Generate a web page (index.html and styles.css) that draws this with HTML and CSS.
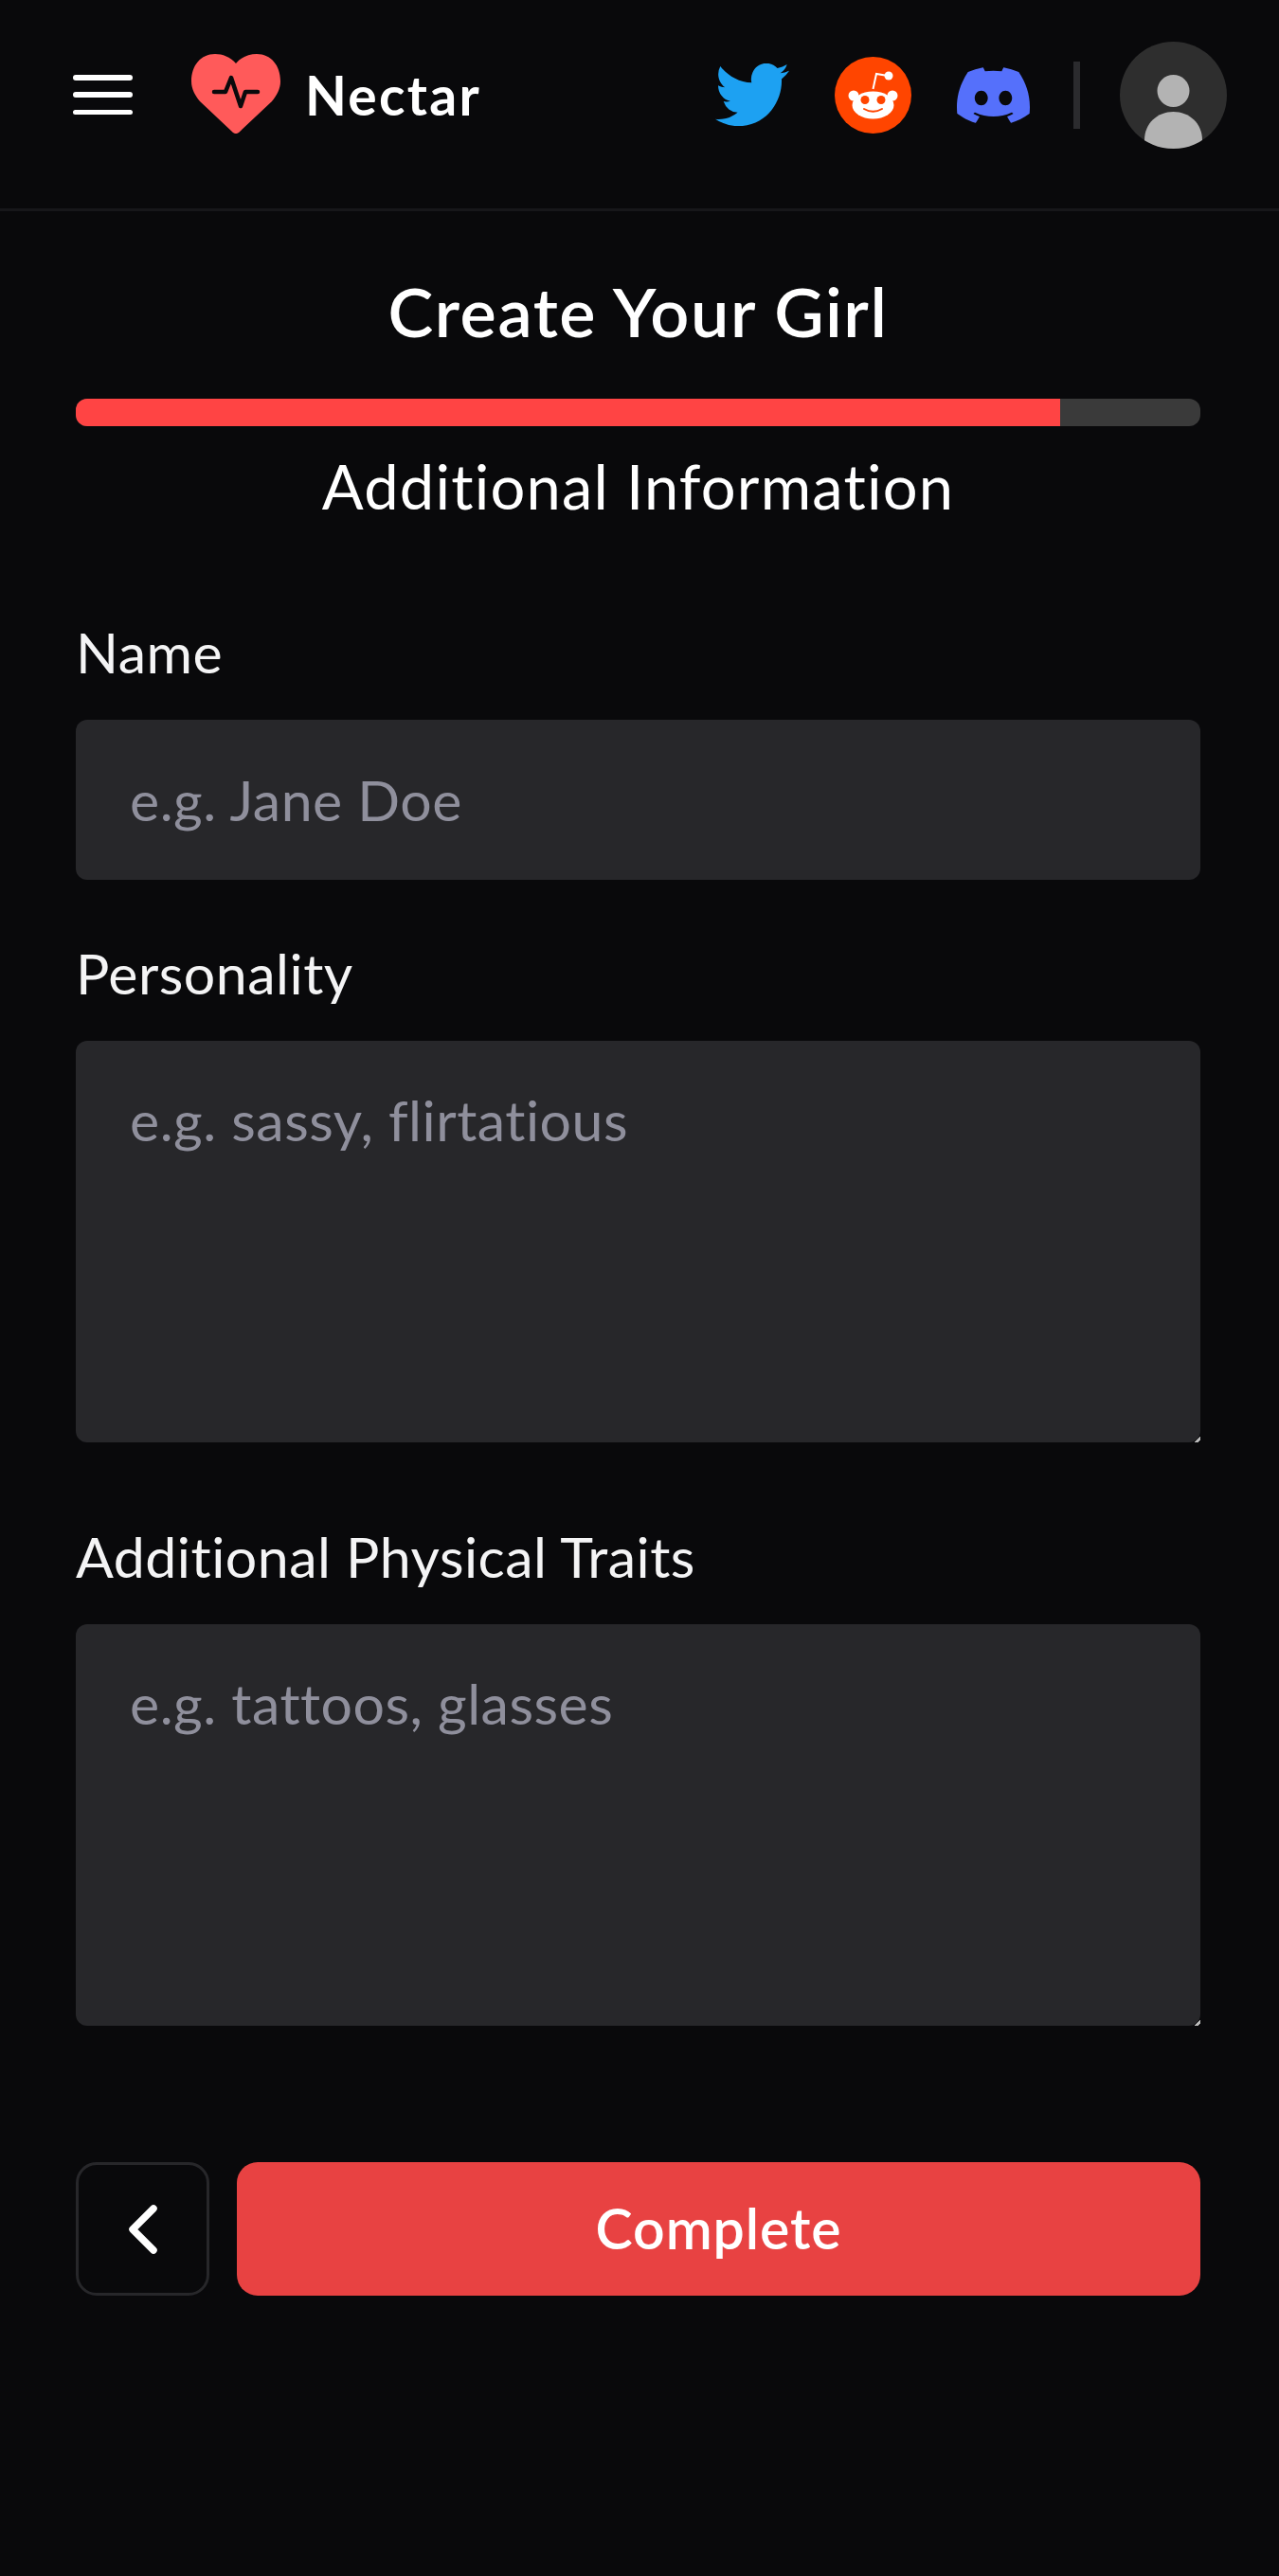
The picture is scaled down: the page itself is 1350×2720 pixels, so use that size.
FILE: index.html
```html
<!DOCTYPE html>
<html lang="en">
<head>
<meta charset="utf-8">
<title>Nectar</title>
<link rel="stylesheet" href="styles.css">
</head>
<body>
<header class="topbar">
  <div class="brand-group">
    <button class="menu" aria-label="Menu"><span></span><span></span><span></span></button>
    <svg class="heart" viewBox="0 0 94 84">
      <path fill="#ff5a5a" d="M47 10C41 3 33 0 25 0 10 0 0 12 0 29c0 8 4 15 9 21l35 33c2 1.500 4 1.500 6 0l35-33c5-6 9-13 9-21C94 12 84 0 69 0 61 0 53 3 47 10z"/>
      <path fill="none" stroke="#0a0a0c" stroke-width="4.500" stroke-linecap="round" stroke-linejoin="round" d="M24 40h12l6-15 10 30 5-15h13"/>
    </svg>
    <span class="logo-text">Nectar</span>
  </div>
  <div class="socials">
    <svg class="ic-twitter" viewBox="0 2.300 24 19.400" preserveAspectRatio="none"><path fill="#1da1f2" d="M23.953 4.570a10 10 0 01-2.825.775 4.958 4.958 0 002.163-2.723c-.951.555-2.005.959-3.127 1.184a4.920 4.920 0 00-8.384 4.482C7.690 8.095 4.067 6.130 1.640 3.162a4.822 4.822 0 00-.666 2.475c0 1.710.870 3.213 2.188 4.096a4.904 4.904 0 01-2.228-.616v.060a4.923 4.923 0 003.946 4.827 4.996 4.996 0 01-2.212.085 4.936 4.936 0 004.604 3.417 9.867 9.867 0 01-6.102 2.105c-.390 0-.779-.023-1.170-.067a13.995 13.995 0 007.557 2.209c9.053 0 13.998-7.496 13.998-13.985 0-.210 0-.420-.015-.630A9.935 9.935 0 0024 4.590z"/></svg>
    <svg class="ic-reddit" viewBox="0 0 81 81">
      <circle cx="40.500" cy="40.500" r="40.500" fill="#ff4500"/>
      <circle cx="20" cy="41" r="5.500" fill="#fff"/>
      <circle cx="61" cy="41" r="5.500" fill="#fff"/>
      <ellipse cx="40.500" cy="51" rx="22" ry="14.500" fill="#fff"/>
      <circle cx="32" cy="45.500" r="4.500" fill="#ff4500"/>
      <circle cx="49" cy="45.500" r="4.500" fill="#ff4500"/>
      <path d="M31 55c6 3.500 13 3.500 19 0" fill="none" stroke="#ff4500" stroke-width="2" stroke-linecap="round"/>
      <path d="M40.500 34l3.500-16 12 2" fill="none" stroke="#fff" stroke-width="2"/>
      <circle cx="57" cy="20" r="4.500" fill="#fff"/>
    </svg>
    <svg class="ic-discord" viewBox="0 2.800 24 18.400" preserveAspectRatio="none"><path fill="#5570fb" d="M20.317 4.3698a19.7913 19.7913 0 00-4.8851-1.5152.0741.0741 0 00-.0785.0371c-.211.3753-.4447.8648-.6083 1.2495-1.8447-.2762-3.68-.2762-5.4868 0-.1636-.3933-.4058-.8742-.6177-1.2495a.077.077 0 00-.0785-.037 19.7363 19.7363 0 00-4.8852 1.515.0699.0699 0 00-.0321.0277C.5334 9.0458-.319 13.5799.0992 18.0578a.0824.0824 0 00.0312.0561c2.0528 1.5076 4.0413 2.4228 5.9929 3.0294a.0777.0777 0 00.0842-.0276c.4616-.6304.8731-1.2952 1.226-1.9942a.076.076 0 00-.0416-.1057c-.6528-.2476-1.2743-.5495-1.8722-.8923a.077.077 0 01-.0076-.1277c.1258-.0943.2517-.1923.3718-.2914a.0743.0743 0 01.0776-.0105c3.9278 1.7933 8.18 1.7933 12.0614 0a.0739.0739 0 01.0785.0095c.1202.099.246.1981.3728.2924a.077.077 0 01-.0066.1276 12.2986 12.2986 0 01-1.873.8914.0766.0766 0 00-.0407.1067c.3604.698.7719 1.3628 1.225 1.9932a.076.076 0 00.0842.0286c1.961-.6067 3.9495-1.5219 6.0023-3.0294a.077.077 0 00.0313-.0552c.5004-5.177-.8382-9.6739-3.5485-13.6604a.061.061 0 00-.0312-.0286zM8.02 15.3312c-1.1825 0-2.1569-1.0857-2.1569-2.419 0-1.3332.9555-2.4189 2.157-2.4189 1.2108 0 2.1757 1.0952 2.1568 2.419 0 1.3332-.9555 2.4189-2.1569 2.4189zm7.9748 0c-1.1825 0-2.1569-1.0857-2.1569-2.419 0-1.3332.9554-2.4189 2.1569-2.4189 1.2108 0 2.1757 1.0952 2.1568 2.419 0 1.3332-.946 2.4189-2.1568 2.4189Z"/></svg>
    <span class="divider"></span>
    <svg class="avatar" viewBox="0 0 113 113">
      <defs><clipPath id="avatar-clip"><circle cx="56.500" cy="56.500" r="56.500"/></clipPath></defs>
      <circle cx="56.500" cy="56.500" r="56.500" fill="#2e2e2e"/>
      <g clip-path="url(#avatar-clip)" fill="#b3b3b3">
        <circle cx="56.500" cy="52" r="17"/>
        <path d="M26 113V104C26 86 40 74 56.500 74S87 86 87 104V113z"/>
      </g>
    </svg>
  </div>
</header>
<main class="page">
  <h1 class="title">Create Your Girl</h1>
  <div class="track"><div class="fill" style="width:87.500%"></div></div>
  <h2 class="subtitle">Additional Information</h2>
  <form class="form">
    <label class="field">
      <span class="label">Name</span>
      <input class="control" type="text" placeholder="e.g. Jane Doe">
    </label>
    <label class="field field-mid">
      <span class="label">Personality</span>
      <textarea class="control area" placeholder="e.g. sassy, flirtatious"></textarea>
    </label>
    <label class="field field-last">
      <span class="label">Additional Physical Traits</span>
      <textarea class="control area" placeholder="e.g. tattoos, glasses"></textarea>
    </label>
    <div class="actions">
      <button class="back" type="button" aria-label="Back">
        <svg viewBox="0 0 30 52"><path d="M26 4L4 26l22 22" fill="none" stroke="#fff" stroke-width="7.500" stroke-linecap="round" stroke-linejoin="round"/></svg>
      </button>
      <button class="complete" type="button">Complete</button>
    </div>
  </form>
</main>
</body>
</html>
```

FILE: styles.css
```css
* { box-sizing: border-box; }
html, body { margin: 0; padding: 0; }
body {
  background: #09090b;
  color: #fff;
  font-family: "Lato", "Open Sans", sans-serif;
  font-variant-ligatures: none;
  min-height: 2720px;
}
.topbar {
  height: 223px;
  border-bottom: 3px solid #17171a;
  display: flex;
  align-items: flex-start;
  justify-content: space-between;
  padding: 44px 55px 0 77px;
}
.brand-group { display: flex; align-items: center; height: 112px; }
.menu {
  width: 63px; height: 42px; padding: 0; border: 0; background: none;
  display: flex; flex-direction: column; justify-content: space-between;
  margin-right: 62px;
}
.menu span { display: block; height: 5.500px; background: #fff; border-radius: 3px; }
.heart { width: 94px; height: 84px; margin: -2px 26px 0 0; }
.logo-text { font-size: 57px; font-weight: 700; line-height: 1; letter-spacing: 2.300px; }
.socials { display: flex; align-items: center; height: 112px; gap: 48px; }
.ic-twitter { width: 78px; height: 66px; flex: none; }
.ic-reddit { width: 81px; height: 81px; flex: none; }
.ic-discord { width: 77px; height: 59px; flex: none; }
.divider { width: 7px; height: 71px; background: #2b2b2e; margin: 0 -6px 0 -2px; flex: none; }
.avatar { width: 113px; height: 113px; flex: none; }
.page { padding: 0 83px 0 80px; }
.title {
  margin: 60px 0 0; text-align: center; font-size: 72px; font-weight: 600; line-height: 90px; letter-spacing: 1.600px;
}
.track { height: 29px; margin-top: 48px; background: #3a3a3a; border-radius: 12px; overflow: hidden; }
.fill { height: 100%; background: #ff4444; }
.subtitle { margin: 21px 0 0; text-align: center; font-size: 65px; font-weight: 400; line-height: 84px; letter-spacing: 1.200px; }
.form { margin-top: 96px; display: flex; flex-direction: column; }
.field { display: flex; flex-direction: column; margin-bottom: 61px; }
.field-mid { margin-bottom: 83px; }
.field-last { margin-bottom: 144px; }
.label { font-size: 59px; font-weight: 400; line-height: 76px; margin-bottom: 33px; letter-spacing: .5px; color: #f4f4f5; }
.control {
  display: block; width: 100%; height: 169px; margin: 0;
  background: #27272a; color: #fff; border: 0; border-radius: 12px; outline: 0;
  padding: 0 57px; font: inherit; font-size: 59px; font-weight: 400; letter-spacing: .5px;
}
.control::placeholder { color: #8f8f9c; opacity: 1; }
.area { height: 424px; padding-top: 47px; line-height: 74px; resize: vertical; }
.area::-webkit-resizer { background: linear-gradient(135deg, transparent 78%, #bbb 78%, #bbb 92%, transparent 92%); }
.actions { display: flex; gap: 29px; height: 141px; }
.back {
  width: 141px; flex: none; background: #09090b; border: 3px solid #27272a; border-radius: 22px;
  display: flex; align-items: center; justify-content: center; padding: 0;
}
.back svg { width: 30px; height: 52px; display: block; }
.complete {
  flex: 1; background: #e84242; color: #fff; border: 0; border-radius: 22px; padding: 0 0 2px;
  font: inherit; font-size: 59px; font-weight: 600; letter-spacing: .9px;
}
```
